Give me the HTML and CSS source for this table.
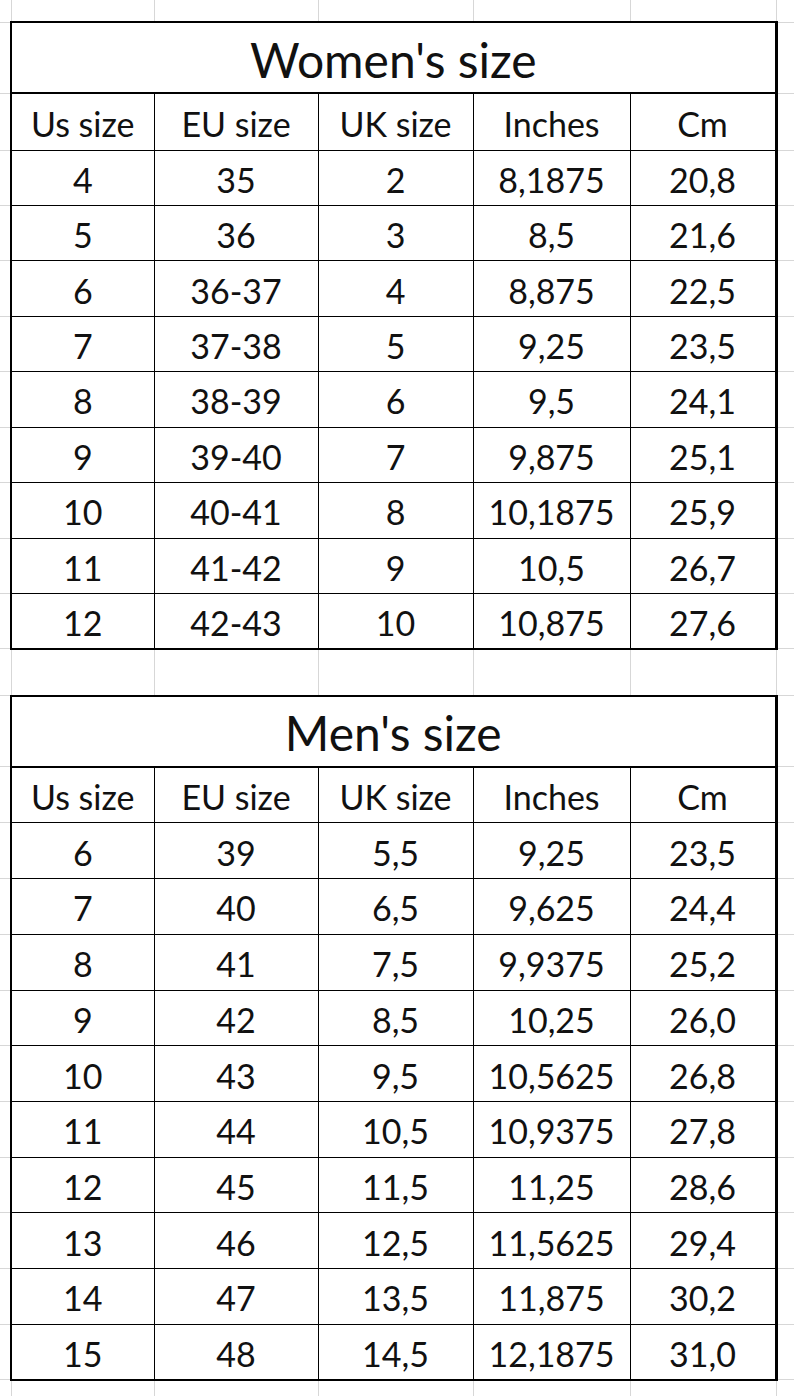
FILE: index.html
```html
<!DOCTYPE html>
<html>
<head>
<meta charset="utf-8">
<link rel="stylesheet" href="styles.css">
<title>Size chart</title>
</head>
<body>
<table class="sheet">
  <colgroup>
    <col class="w-m1"><col class="w-a"><col class="w-b"><col class="w-c"><col class="w-d"><col class="w-e"><col class="w-m2">
  </colgroup>
  <tbody>
    <tr class="r-top"><td class="g first"></td><td class="g"></td><td class="g"></td><td class="g"></td><td class="g"></td><td class="g"></td><td class="g"></td></tr>

    <tr class="r-title"><td class="g first"></td><td class="c title" colspan="5">Women's size</td><td class="g"></td></tr>
    <tr class="r-hdr"><td class="g first"></td><td class="c l">Us size</td><td class="c">EU size</td><td class="c">UK size</td><td class="c">Inches</td><td class="c r">Cm</td><td class="g"></td></tr>
    <tr class="r-w"><td class="g first"></td><td class="c l">4</td><td class="c">35</td><td class="c">2</td><td class="c">8,1875</td><td class="c r">20,8</td><td class="g"></td></tr>
    <tr class="r-w"><td class="g first"></td><td class="c l">5</td><td class="c">36</td><td class="c">3</td><td class="c">8,5</td><td class="c r">21,6</td><td class="g"></td></tr>
    <tr class="r-w"><td class="g first"></td><td class="c l">6</td><td class="c">36-37</td><td class="c">4</td><td class="c">8,875</td><td class="c r">22,5</td><td class="g"></td></tr>
    <tr class="r-w"><td class="g first"></td><td class="c l">7</td><td class="c">37-38</td><td class="c">5</td><td class="c">9,25</td><td class="c r">23,5</td><td class="g"></td></tr>
    <tr class="r-w"><td class="g first"></td><td class="c l">8</td><td class="c">38-39</td><td class="c">6</td><td class="c">9,5</td><td class="c r">24,1</td><td class="g"></td></tr>
    <tr class="r-w"><td class="g first"></td><td class="c l">9</td><td class="c">39-40</td><td class="c">7</td><td class="c">9,875</td><td class="c r">25,1</td><td class="g"></td></tr>
    <tr class="r-w"><td class="g first"></td><td class="c l">10</td><td class="c">40-41</td><td class="c">8</td><td class="c">10,1875</td><td class="c r">25,9</td><td class="g"></td></tr>
    <tr class="r-w"><td class="g first"></td><td class="c l">11</td><td class="c">41-42</td><td class="c">9</td><td class="c">10,5</td><td class="c r">26,7</td><td class="g"></td></tr>
    <tr class="r-w"><td class="g first"></td><td class="c l b">12</td><td class="c b">42-43</td><td class="c b">10</td><td class="c b">10,875</td><td class="c r b">27,6</td><td class="g"></td></tr>

    <tr class="r-gap"><td class="g first"></td><td class="g"></td><td class="g"></td><td class="g"></td><td class="g"></td><td class="g"></td><td class="g"></td></tr>

    <tr class="r-title"><td class="g first"></td><td class="c title" colspan="5">Men's size</td><td class="g"></td></tr>
    <tr class="r-hdr2"><td class="g first"></td><td class="c l">Us size</td><td class="c">EU size</td><td class="c">UK size</td><td class="c">Inches</td><td class="c r">Cm</td><td class="g"></td></tr>
    <tr class="r-m"><td class="g first"></td><td class="c l">6</td><td class="c">39</td><td class="c">5,5</td><td class="c">9,25</td><td class="c r">23,5</td><td class="g"></td></tr>
    <tr class="r-m"><td class="g first"></td><td class="c l">7</td><td class="c">40</td><td class="c">6,5</td><td class="c">9,625</td><td class="c r">24,4</td><td class="g"></td></tr>
    <tr class="r-m"><td class="g first"></td><td class="c l">8</td><td class="c">41</td><td class="c">7,5</td><td class="c">9,9375</td><td class="c r">25,2</td><td class="g"></td></tr>
    <tr class="r-m"><td class="g first"></td><td class="c l">9</td><td class="c">42</td><td class="c">8,5</td><td class="c">10,25</td><td class="c r">26,0</td><td class="g"></td></tr>
    <tr class="r-m"><td class="g first"></td><td class="c l">10</td><td class="c">43</td><td class="c">9,5</td><td class="c">10,5625</td><td class="c r">26,8</td><td class="g"></td></tr>
    <tr class="r-m"><td class="g first"></td><td class="c l">11</td><td class="c">44</td><td class="c">10,5</td><td class="c">10,9375</td><td class="c r">27,8</td><td class="g"></td></tr>
    <tr class="r-m"><td class="g first"></td><td class="c l">12</td><td class="c">45</td><td class="c">11,5</td><td class="c">11,25</td><td class="c r">28,6</td><td class="g"></td></tr>
    <tr class="r-m"><td class="g first"></td><td class="c l">13</td><td class="c">46</td><td class="c">12,5</td><td class="c">11,5625</td><td class="c r">29,4</td><td class="g"></td></tr>
    <tr class="r-m"><td class="g first"></td><td class="c l">14</td><td class="c">47</td><td class="c">13,5</td><td class="c">11,875</td><td class="c r">30,2</td><td class="g"></td></tr>
    <tr class="r-m"><td class="g first"></td><td class="c l b">15</td><td class="c b">48</td><td class="c b">14,5</td><td class="c b">12,1875</td><td class="c r b">31,0</td><td class="g"></td></tr>

    <tr class="r-bot"><td class="g first"></td><td class="g"></td><td class="g"></td><td class="g"></td><td class="g"></td><td class="g"></td><td class="g"></td></tr>
  </tbody>
</table>
</body>
</html>
```
FILE: styles.css
```css
html, body {
  margin: 0;
  padding: 0;
  background: #ffffff;
}
body {
  width: 794px;
  height: 1396px;
  overflow: hidden;
}
.sheet {
  border-collapse: collapse;
  table-layout: fixed;
  width: 794px;
  font-family: Lato, "Open Sans", sans-serif;
  color: #111111;
}
.w-m1 { width: 11px; }
.w-a { width: 143px; }
.w-b { width: 164px; }
.w-c { width: 155px; }
.w-d { width: 157px; }
.w-e { width: 146px; }
.w-m2 { width: 18px; }

td {
  padding: 0;
  text-align: center;
  vertical-align: middle;
  white-space: nowrap;
}
.g {
  border: 1px solid #d7d7d7;
}
.g.first {
  border-left: none;
}
.r-top .g {
  border-top: none;
}
.c {
  border: 1px solid #000000;
  background: #ffffff;
  font-size: 34px;
  line-height: 34px;
  padding-top: 4px;
}
.c.l { border-left: 2px solid #000000; }
.c.r { border-right: 3px solid #000000; }
.c.b { border-bottom: 2px solid #000000; }
.c.title {
  border: 2px solid #000000;
  border-right-width: 3px;
  font-size: 48px;
  line-height: 48px;
  padding-top: 4px;
}

.r-top { height: 22px; }
.r-title { height: 71px; }
.r-hdr { height: 57px; }
.r-hdr2 { height: 56px; }
.r-w { height: 55.45px; }
.r-gap { height: 47px; }
.r-m { height: 55.7px; }
.r-bot { height: 40px; }
```
